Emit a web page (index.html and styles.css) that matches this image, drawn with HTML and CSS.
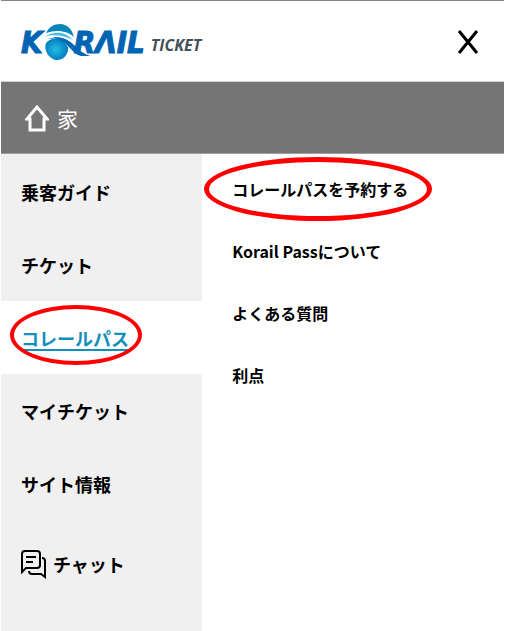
FILE: index.html
```
<!DOCTYPE html>
<html lang="ja">
<head>
    <meta charset="UTF-8">
    <meta name="viewport" content="width=device-width, initial-scale=1.0">
    <title>KORAIL TICKET</title>
    <link rel="stylesheet" href="styles.css">
</head>
<body>
<div class="page">
    <header class="header">
        <a class="logo" href="#">
            <span class="logo-name">K</span>
            <svg class="logo-globe" viewBox="0 0 52 38" aria-hidden="true">
                <defs>
                    <radialGradient id="globe" cx="45%" cy="50%" r="60%">
                        <stop offset="0" stop-color="#22bfe2"/>
                        <stop offset="1" stop-color="#0070bc"/>
                    </radialGradient>
                </defs>
                <path fill="#0c86b8" d="M3 10C6 4 11 1 17 1C24 1 29 6 31 14C25 8 14 6 3 10Z"/>
                <path fill="#46bde0" d="M1 14C12 7 23 9 30 17C21 12 9 11 1 14Z"/>
                <path fill="url(#globe)" d="M3 20C7 15 17 14 22 20C24 23 26 24 25 27C24 33 20 37 14 37C8 37 0 29 3 20Z"/>
                <path fill="#0068b4" d="M5 16C15 12 23 15 30 21C36 27 42 32 48 33H38C30 31 26 22 19 18C15 15 10 15 5 16Z"/>
            </svg>
            <span class="logo-name">RΛIL</span>
            <span class="logo-sub">TICKET</span>
        </a>
        <button class="close" type="button" aria-label="閉じる">
            <svg viewBox="0 0 22 26" aria-hidden="true">
                <path d="M2 2L20 24M20 2L2 24"/>
            </svg>
        </button>
    </header>

    <a class="home" href="#">
        <svg class="home-icon" viewBox="0 0 24 28" aria-hidden="true">
            <path d="M2 15L12 3L22 15H19V26H5V15Z"/>
        </svg>
        <span>家</span>
    </a>

    <div class="content">
        <nav class="menu">
            <a href="#">乗客ガイド</a>
            <a href="#">チケット</a>
            <a class="active" href="#"><span class="circled">コレールパス</span></a>
            <a href="#">マイチケット</a>
            <a href="#">サイト情報</a>
            <a class="chat" href="#">
                <svg class="chat-icon" viewBox="0 0 26 30" aria-hidden="true">
                    <path d="M1 23V5Q1 2 4 2H16Q19 2 19 5V16Q19 19 16 19H5Z"/>
                    <path d="M5 8H15M5 13H12"/>
                    <path d="M21 9Q24 9 24 12V28L20 25H11Q8 25 8 22"/>
                </svg>
                <span>チャット</span>
            </a>
        </nav>
        <nav class="submenu">
            <a href="#"><span class="circled">コレールパスを予約する</span></a>
            <a href="#">Korail Passについて</a>
            <a href="#">よくある質問</a>
            <a href="#">利点</a>
        </nav>
    </div>
</div>
</body>
</html>
```
FILE: styles.css
```
* {
    box-sizing: border-box;
}

body {
    margin: 0;
    background-color: #fff;
    color: #000;
    font-family: "Noto Sans CJK JP", sans-serif;
}

.page {
    display: flex;
    flex-direction: column;
    min-height: 100vh;
    padding: 0 2px 0 1px;
}

a {
    color: inherit;
    text-decoration: none;
}

.header {
    display: flex;
    justify-content: space-between;
    align-items: center;
    height: 82px;
    padding: 2px 25px 0 20px;
    border-top: 1px solid #858585;
    border-bottom: 1px solid #d0d0d0;
}

.logo {
    display: flex;
    align-items: center;
    font-style: italic;
}

.logo-name {
    color: #0064b4;
    font-family: "DejaVu Sans Condensed", "DejaVu Sans", sans-serif;
    font-size: 31px;
    font-weight: bold;
    line-height: 38px;
    -webkit-text-stroke: 1px #0064b4;
}

.logo-globe {
    width: 52px;
    height: 38px;
    margin-right: -21px;
}

.logo-sub {
    margin-left: 6px;
    padding-top: 6px;
    color: #465058;
    font-family: "Open Sans", sans-serif;
    font-size: 16px;
    font-weight: 700;
    line-height: 38px;
}

.close {
    padding: 0;
    border: none;
    background: none;
}

.close svg {
    display: block;
    width: 22px;
    height: 26px;
    fill: none;
    stroke: #000;
    stroke-width: 3;
}

.home {
    display: flex;
    align-items: center;
    gap: 8px;
    height: 72px;
    padding-left: 24px;
    border-bottom: 1px solid #a0a0a0;
    background-color: #757575;
    color: #fff;
    font-size: 21px;
    font-weight: 400;
}

.home-icon {
    width: 24px;
    height: 28px;
    fill: none;
    stroke: #fff;
    stroke-width: 3;
}

.content {
    display: flex;
    flex: 1;
}

.menu {
    width: 40%;
    padding-top: 1px;
    background-color: #f0f0f0;
    font-size: 18px;
    font-weight: 700;
}

.menu a {
    display: flex;
    align-items: center;
    height: 73px;
    padding-left: 20px;
}

.menu .active {
    background-color: #fff;
    color: #128fbb;
    text-decoration: underline;
    text-decoration-thickness: 2px;
    text-underline-offset: 3px;
}

.menu .chat {
    gap: 6px;
    height: 88px;
}

.chat-icon {
    width: 26px;
    height: 30px;
    fill: none;
    stroke: #000;
    stroke-width: 2;
}

.submenu {
    flex: 1;
    padding: 4px 0 0 30px;
    font-size: 16px;
    font-weight: 700;
}

.submenu a {
    display: flex;
    align-items: center;
    height: 62px;
}

.circled {
    position: relative;
}

/* red ring around the links to press */
.circled::after {
    content: "";
    position: absolute;
    inset: -20px -13px -14px -11px;
    border: 4px solid #f00;
    border-radius: 50%;
}

.submenu .circled::after {
    inset: -20px -24px -20px -28px;
    border-width: 5px;
}
```
